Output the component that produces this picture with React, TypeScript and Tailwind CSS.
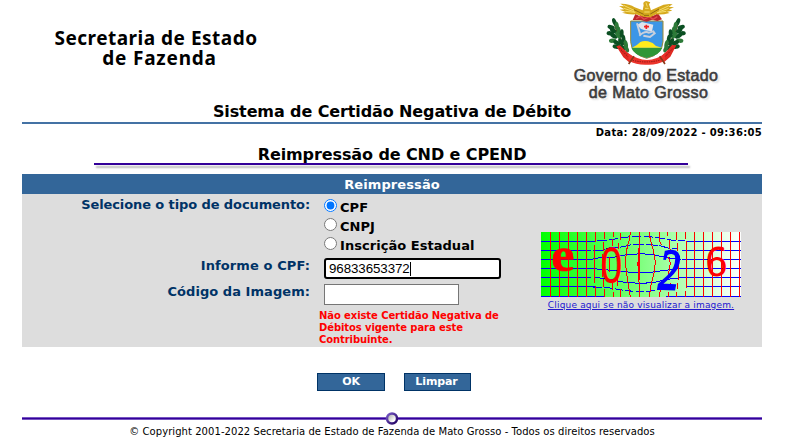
import React from 'react';

const leaves = [
  [66, 66, 65], [74, 78, 80], [55, 82, 15], [62, 92, 30], [80, 92, 85], [52, 100, 5], [64, 108, 25],
  [78, 106, 50], [90, 100, 95], [96, 116, 80], [60, 122, -5], [74, 128, 20], [88, 126, 50], [104, 132, 75],
  [72, 140, 10], [92, 142, 30], [106, 146, 60],
];

function Branch() {
  return (
    <g transform="translate(14 0) scale(.9 1)">
      <path d="M66 72Q76 112 112 150" stroke="#5a3a12" strokeWidth="4" fill="none" />
      {leaves.map(([x, y, r], i) => (
        <ellipse key={i} cx={x} cy={y} rx="12.5" ry="6.5" transform={`rotate(${r} ${x} ${y})`} fill={i % 3 === 1 ? '#2c7a38' : '#0b4f22'} />
      ))}
    </g>
  );
}

function CoatOfArms() {
  return (
    <svg className="block h-[70px] w-[110px]" viewBox="0 0 330 210">
      <Branch />
      <g transform="translate(337 0) scale(-1 1)"><Branch /></g>
      <path d="M122 63H219V125Q217 163 170 175Q124 163 122 125Z" fill="#3c96e6" stroke="#9a8a35" strokeWidth="3" />
      <path d="M124 143H217Q209 166 170 173Q132 166 124 143Z" fill="#2f9636" />
      <path d="M126 143Q140 138 151 126Q160 122 174 124Q190 128 198 138L216 143Z" fill="#ffec1c" />
      <path d="M142 74L156 66L190 74L186 94L164 91L152 86Z" fill="#dfe3ec" />
      <path d="M141 70L151 105M148 107Q165 92 176 98L190 94L194 100L180 111L160 107" stroke="#c9d0dc" strokeWidth="6" fill="none" />
      <path d="M162 80H177M169 74V87" stroke="#f02020" strokeWidth="5" />
      <path d="M128 60L136 42L148 48L154 38L169 46L183 37L190 47L204 40L216 58L202 63L186 59L170 65L152 60Z" fill="#b9262c" />
      <path d="M138 56L151 49L162 58L178 50L189 58L202 50" stroke="#e34b50" strokeWidth="4" fill="none" />
      <path d="M160 50Q148 45 137 43Q112 44 96 38L107 36L89 29L103 28L87 18L103 19L91 11Q118 10 134 22L158 31L161 16Q157 6 168 3L181 7L177 13L183 31L205 21Q224 10 248 13L236 20L252 22L237 28L247 32L231 35L239 39Q216 45 198 43L181 52Z" fill="#d6a91e" />
      <path d="M101 16L132 31M101 25L133 35M106 34L136 37M237 17L207 31M236 25L205 36M229 34L201 38M165 25L176 25M163 36L179 36M168 8L172 20" stroke="#f6df6a" strokeWidth="3" />
      <path d="M132 29L161 43M207 27L181 42M162 46L177 46" stroke="#8f6a10" strokeWidth="3" />
      <path d="M79 139L90 136L111 157L126 168L119 188L100 172Z M259 136L246 135L230 154L214 168L222 187L241 170Z" fill="#e02a22" />
      <path d="M114 160Q142 179 171 180Q201 179 227 160L224 182Q200 196 170 194Q139 195 116 182Z" fill="#ec342b" />
      <path d="M88 144L114 170M128 181Q170 191 212 180M226 169L250 144" stroke="#8e1713" strokeWidth="3" strokeDasharray="4 3" fill="none" />
      <path d="M116 192L132 169M225 192L209 169" stroke="#8a3818" strokeWidth="5" />
    </svg>
  );
}

const rows = [64, 91, 118, 145, 172, 199];

function Captcha() {
  return (
    <svg className="block h-[65px] w-[200px] overflow-visible" viewBox="33 36 600 195">
      <defs>
        <linearGradient id="field">
          <stop offset="0" stopColor="#00ff00" />
          <stop offset="1" stopColor="#ffffff" />
        </linearGradient>
      </defs>
      <rect x="33" y="36" width="600" height="195" fill="url(#field)" />
      <g stroke="#0000ff" strokeWidth="3" fill="none" shapeRendering="crispEdges">
        {rows.map((y) => <path key={y} d={`M33 ${y + 0.5}H${y === 64 || y === 199 ? 194 : 184}M${y === 64 || y === 199 ? 470 : 456} ${y + 0.5}H633`} />)}
        <path d="M33 229.5H226M408 229.5H633" />
        <path d="M202 62L238 60L270 54L310 49H352L390 54L422 60L464 62" strokeDasharray="28 7" />
        <path d="M190 91H217L238 84L265 83L310 73H350L390 77L420 86H445" strokeDasharray="35 5" />
        <path d="M184 118L205 114L250 112L285 105L335 101L375 105L410 113L452 118" />
        <path d="M184 145L220 149L260 152L310 158H355L405 151L456 145" />
        <path d="M196 172L240 178L285 187L330 190L370 188L410 178L455 173" />
        <path d="M190 202L240 204L275 210L310 214H352L390 209L430 202" strokeDasharray="25 7" />
      </g>
      <g stroke="#ff0000" strokeWidth="3" fill="none" shapeRendering="crispEdges">
        {[61.5, 88.5, 115.5, 142.5, 169.5, 494.5, 521.5, 548.5, 575.5, 602.5, 629.5].map((x) => <path key={x} d={`M${x} 36V231`} />)}
        <path d="M196.5 36V66M193.5 75V190M196.5 198V231M223.5 36V58M220.5 66V94M217.5 102V170M220.5 178V200M223.5 208V231" />
        <path d="M250.5 36V50M247.5 58V78M238.5 110V155M247.5 190V209M250.5 217V231M271.5 39V60M265.5 68V88M262.5 178V199M271.5 207V231" />
        <path d="M301 36L298 60L292 78L286 125L289 155L295 195L301 231M328.5 36V84L326 103M326 181L328.5 190V231" />
        <path d="M358 36L361 60L370 90L376 125L373 155L364 190L358 231M388 36V60L394 75M415 110L421 130L415 165M394 190L388 231" />
        <path d="M412.5 36V49M418.5 60V84L424 97M421.5 188V207M415.5 215V231M439.5 36V59M442.5 70V92M445.5 102V179M442.5 188V207M439.5 215V231M466.5 36V56M469.5 64V205M466.5 213V231" />
      </g>
      <path d="M327 84V181M322 125V139" stroke="#ff0000" strokeWidth="4" fill="none" shapeRendering="crispEdges" />
      <text transform="translate(64 153) scale(1.06 1)" fill="#ff0000" stroke="#ff0000" strokeWidth="2" fontSize="148" fontWeight="700" fontFamily="Liberation Serif, serif">e</text>
      <text transform="translate(212 189) scale(.9 1.17)" fill="#ff0000" stroke="#ff0000" strokeWidth="1" fontSize="128" fontFamily="Liberation Sans, sans-serif">0</text>
      <text transform="translate(383 206) rotate(3) scale(.82 1.14)" fill="#0000ff" stroke="#0000ff" strokeWidth="5" fontSize="154" fontStyle="italic" fontFamily="Liberation Serif, serif">2</text>
      <text transform="translate(524 169) scale(.95 1)" fill="#ff0000" fontSize="116" fontFamily="DejaVu Sans, sans-serif">6</text>
    </svg>
  );
}

function Radio({ label, checked }: { label: string; checked?: boolean }) {
  return (
    <label className="flex h-[19px] items-center gap-[3px]">
      <input type="radio" name="documento" defaultChecked={checked} className="-mt-[5px] size-[13px] shrink-0" />
      <span className="text-[13px] font-bold leading-[19px] tracking-[0.04px] text-black">{label}</span>
    </label>
  );
}

export default function App() {
  return (
    <main className="h-[446px] w-[790px] overflow-hidden bg-white font-['DejaVu_Sans',Verdana,sans-serif] text-black">
      <div className="ml-[22px] w-[740px]">
        <header className="flex h-[102px] justify-between">
          <div className="ml-[32px] mt-[28px] w-[204px] whitespace-nowrap text-center font-['Noto_Sans','Open_Sans',sans-serif] text-[19px] font-bold leading-[20px] tracking-[0.5px]">
            <div>Secretaria de Estado</div>
            <div className="pl-[7px] tracking-[0.8px]">de Fazenda</div>
          </div>
          <div className="mr-[44px] flex w-[144px] flex-col items-center whitespace-nowrap font-['Liberation_Sans',Arial,sans-serif] text-[16px] leading-[17px] tracking-[0.4px] text-[#3c3c3c] [-webkit-text-stroke:0.6px_#3c3c3c] [text-shadow:2px_2px_2px_#ddd]">
            <div className="mr-[2px] h-[67px]"><CoatOfArms /></div>
            <div>Governo do Estado</div>
            <div className="pl-[5px]">de Mato Grosso</div>
          </div>
        </header>
        <h1 className="h-[22px] border-b-2 border-[#4472a4] text-center text-[16px] font-bold leading-[19px] tracking-[-0.11px]">Sistema de Certidão Negativa de Débito</h1>
        <div className="h-[20px] text-right text-[10px] font-bold leading-[17px] tracking-[0.31px]">Data: 28/09/2022 - 09:36:05</div>
        <h2 className="ml-[72px] h-[19px] w-[594px] pl-[2px] text-center text-[16px] font-bold leading-[21px] tracking-[-0.1px]">Reimpressão de CND e CPEND</h2>
        <div className="ml-[72px] h-[2px] w-[594px] bg-[#330099] shadow-[2px_3px_2px_#bbb]" />
        <section className="mt-[9px] bg-[#dddddd]">
          <h3 className="h-[20px] bg-[#336699] text-center text-[13px] font-bold leading-[21px] tracking-[0.1px] text-white">Reimpressão</h3>
          <div className="flex h-[153px]">
            <div className="w-[288px] pt-px text-right text-[13px] font-bold leading-[20px] text-[#003366]">
              <div className="h-[61px] tracking-[-0.1px]">Selecione o tipo de documento:</div>
              <div className="h-[26px] tracking-[0.1px]">Informe o CPF:</div>
              <div className="tracking-[0.05px]">Código da Imagem:</div>
            </div>
            <div className="ml-[9px] w-[200px] pt-[4px]">
              <div className="pl-[5px]">
                <Radio label="CPF" checked />
                <Radio label="CNPJ" />
                <Radio label="Inscrição Estadual" />
                <div className="mt-[3px] flex h-[21px] w-[177px] items-center rounded-[3px] border-2 border-black bg-white pl-[3px] font-['Liberation_Sans',Arial,sans-serif] text-[13.33px] leading-none">
                  <span className="tracking-[-0.08px]">96833653372</span><span className="h-[14px] w-px bg-black" />
                </div>
                <div className="mt-[5px] h-[21px] w-[135px] border border-[#767676] bg-white" />
              </div>
              <p className="mt-[5px] whitespace-nowrap text-[10px] font-bold leading-[12px] tracking-[-0.09px] text-[#ff0000]">Não existe Certidão Negativa de<br />Débitos vigente para este<br />Contribuinte.</p>
            </div>
            <div className="ml-[22px] w-[200px] pt-[38px] text-center text-[9px] leading-[16px]">
              <Captcha />
              <a className="whitespace-nowrap tracking-[0.17px] text-[#2318d0] underline">Clique aqui se não visualizar a imagem.</a>
            </div>
          </div>
        </section>
        <div className="ml-[295px] mt-[26px] flex gap-[19px] text-[11px] font-bold leading-[16px] tracking-[-0.1px] text-white">
          <button className="h-[18px] w-[68px] border border-[#003366] bg-[#336699]">OK</button>
          <button className="h-[18px] w-[67px] border border-[#003366] bg-[#336699] pr-[2px]">Limpar</button>
        </div>
        <footer className="mt-[20px]">
          <svg className="block h-[14px] w-[740px]" viewBox="0 0 740 14">
            <defs>
              <linearGradient id="ring" x2="1" y2="1"><stop stopColor="#785ac8" /><stop offset="1" stopColor="#200060" /></linearGradient>
              <linearGradient id="pearl" x2="1" y2="1"><stop stopColor="#999" /><stop offset=".7" stopColor="#fff" /></linearGradient>
            </defs>
            <path d="M0 7.5H740" stroke="#7654c2" strokeWidth="3" />
            <path d="M0 7.5H740" stroke="#330099" strokeWidth="1" />
            <circle cx="370" cy="7.5" r="5" fill="url(#pearl)" stroke="url(#ring)" strokeWidth="2.5" />
          </svg>
          <p className="text-center text-[10px] leading-[14px] tracking-[0.06px]">© Copyright 2001-2022 Secretaria de Estado de Fazenda de Mato Grosso - Todos os direitos reservados</p>
        </footer>
      </div>
    </main>
  );
}
